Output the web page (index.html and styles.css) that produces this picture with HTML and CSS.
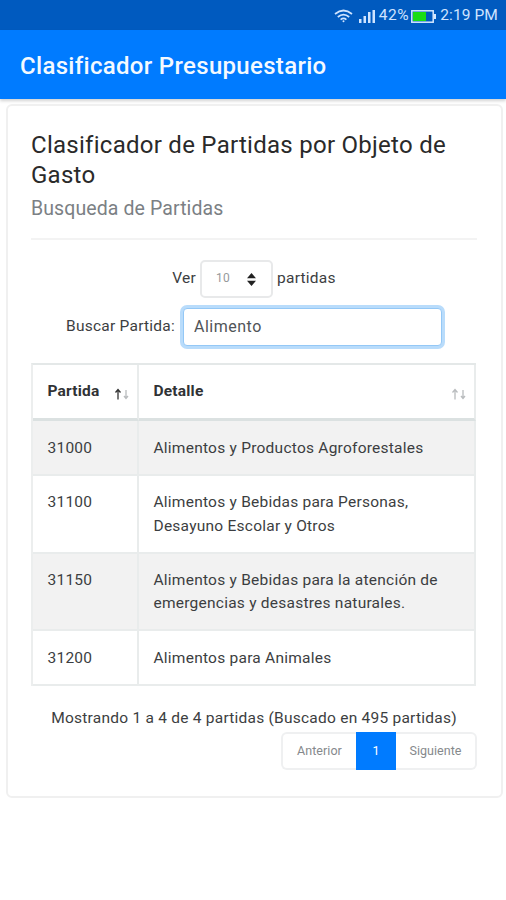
FILE: index.html
```html
<!DOCTYPE html>
<html lang="es">
<head>
<meta charset="utf-8">
<title>Clasificador Presupuestario</title>
<link rel="stylesheet" href="styles.css">
</head>
<body>
<div class="status">
  <svg class="wifi" width="19" height="14" viewBox="0 0 19 14" fill="none" stroke="currentColor" stroke-width="1.700"><path d="M1 5Q9.500-2 18 5M3.800 8Q9.500 3.200 15.200 8M6.600 10.600Q9.500 8.200 12.400 10.600"/><circle cx="9.500" cy="12.300" r="1" fill="currentColor" stroke="none"/></svg>
  <svg class="signal" width="16" height="13" viewBox="0 0 16 13" fill="currentColor"><path d="M0 9h2.500v4H0zM4.500 6H7v7H4.500zM9 2h2.500v11H9zM13.500 0H16v13h-2.500z"/></svg>
  <span class="percent">42%</span>
  <svg class="battery" width="25" height="13" viewBox="0 0 25 13"><rect x=".8" y=".8" width="21.400" height="11.400" fill="none" stroke="#d5e8ff" stroke-width="1.500"/><path d="M23 4h2v5h-2z" fill="#d5e8ff"/><path d="M2 2h13v9H2z" fill="#19dc16"/></svg>
  <span class="time">2:19 PM</span>
</div>
<header class="appbar"><h1><span>Clasificador Presupuestario</span></h1></header>
<main class="card">
  <h2 class="title">Clasificador de Partidas por Objeto de<br>Gasto</h2>
  <h3 class="subtitle"><span>Busqueda de Partidas</span></h3>
  <hr>
  <div class="length"><span class="ver">Ver</span>
    <div class="select"><span>10</span><svg width="9" height="13" viewBox="0 0 9 13" fill="#222"><path d="M0 5.200 4.500 0 9 5.200zM0 7.800h9L4.500 13z"/></svg></div>
    <span class="len-after">partidas</span></div>
  <div class="search"><label for="q">Buscar Partida:</label><input id="q" type="text" value="Alimento"></div>
  <table>
    <thead><tr>
      <th class="code"><div class="head"><span>Partida</span><svg class="sort" width="14" height="12" viewBox="0 0 14 12" fill="none" stroke-width="1.300"><path class="on" d="M3 11.500V1.500M.5 4.500 3 1.500l2.500 3"/><path class="off" d="M11 2v8.500M9 8l2 2.500L13 8"/></svg></div></th>
      <th><div class="head"><span>Detalle</span><svg class="sort" width="14" height="12" viewBox="0 0 14 12" fill="none" stroke-width="1.300"><path class="off" d="M3 11.500V1.500M.5 4.500 3 1.500l2.500 3"/><path class="off" d="M11 2v8.500M9 8l2 2.500L13 8"/></svg></div></th>
    </tr></thead>
    <tbody>
      <tr class="odd"><td>31000</td><td><span>Alimentos y Productos Agroforestales</span></td></tr>
      <tr class="tall"><td>31100</td><td>Alimentos y Bebidas para Personas,<br>Desayuno Escolar y Otros</td></tr>
      <tr class="odd tall"><td>31150</td><td>Alimentos y Bebidas para la atención de<br>emergencias y desastres naturales.</td></tr>
      <tr><td>31200</td><td>Alimentos para Animales</td></tr>
    </tbody>
  </table>
  <p class="info"><span>Mostrando 1 a 4 de 4 partidas (Buscado en 495 partidas)</span></p>
  <nav class="pages"><span class="prev">Anterior</span><span class="current">1</span><span class="next">Siguiente</span></nav>
</main>
</body>
</html>
```
FILE: styles.css
```css
* { box-sizing: border-box; }
body {
  margin: 0;
  min-height: 900px;
  background: #fff;
  color: #3c3e41;
  font: 15.5px/23.5px Roboto, "Liberation Sans", sans-serif;
  letter-spacing: .24px;
}
.status {
  height: 30px;
  padding: 2px 8px 0 0;
  display: flex;
  align-items: center;
  justify-content: flex-end;
  background: #005abf;
  color: #cfe4ff;
  font-size: 15.5px;
  letter-spacing: .1px;
}
.signal { margin-left: 6px; }
.percent { margin-left: 4px; letter-spacing: .6px; }
.battery { margin-left: 2px; }
.time { margin-left: 4px; }
.appbar {
  height: 69px;
  padding: 0 20px;
  display: flex;
  align-items: center;
  background: #007bff;
  box-shadow: 0 2px 3px rgba(0, 0, 0, .18);
}
h1 { margin: 2px 0 0; font-size: 24px; line-height: 32px; font-weight: 500; color: #f4f9ff; letter-spacing: .31px; }
.card {
  margin: 5px 3px 0 6px;
  height: 694px;
  padding: 25px 24px 0 23px;
  border: 2px solid #f0f0f0;
  border-radius: 6px;
}
.title { margin: 0; font-size: 24px; line-height: 29.5px; font-weight: 400; color: #2a2a2a; letter-spacing: .27px; white-space: nowrap; }
.subtitle { margin: 7px 0 0; font-size: 19.5px; line-height: 24px; font-weight: 400; color: #7b8084; letter-spacing: .1px; }
hr { margin: 17px 0 19px; border: 0; border-top: 2px solid #f3f3f3; }
.length { display: flex; justify-content: center; align-items: center; height: 40px; gap: 4px; }
.select {
  width: 73px; height: 38px; padding: 0 15px 0 14px;
  display: flex; align-items: center; justify-content: space-between;
  border: 2px solid #e8e9ea; border-radius: 5px;
  font-size: 12px; color: #96999b;
}
.search { display: flex; align-items: center; margin: 9px 0 0 35px; height: 38px; }
.search label { width: 117px; white-space: nowrap; }
input {
  width: 259px; height: 38px; padding: 0 10px 2px;
  border: 1px solid #94c8f6; border-radius: 4px; outline: 0;
  box-shadow: 0 0 0 3px #b9dcfb;
  color: #505458; background: #fff; font: inherit; font-size: 16px; letter-spacing: .5px;
}
table { width: 445px; margin-top: 17px; border-collapse: separate; border-spacing: 0; table-layout: fixed; border-top: 2px solid #e4e8e8; border-left: 2px solid #eceeee; }
th, td { text-align: left; border-right: 2px solid #e9ecec; border-bottom: 2px solid #e9ecec; padding: 0 14px 0 14.5px; vertical-align: top; }
th { height: 56px; border-bottom: 3px solid #dbe1e1; padding-right: 8px; vertical-align: middle; font-weight: 700; letter-spacing: .2px; color: #303235; }
th.code { width: 106px; }
.head { display: flex; justify-content: space-between; align-items: center; }
.sort { margin-top: 4px; }
.on { stroke: #333; }
.off { stroke: #b9bcbe; }
td { height: 55px; padding-top: 15.5px; white-space: nowrap; }
.tall td { height: 77.5px; padding-top: 15px; }
.odd td { background: #f2f2f2; }
.info { margin: 20px 0 0; text-align: center; line-height: 24px; white-space: nowrap; }
.pages { display: flex; justify-content: flex-end; height: 38px; margin-top: 2px; font-size: 12.5px; line-height: 34px; letter-spacing: .05px; color: #85898c; text-align: center; }
.pages span { border: 2px solid #eff0f1; }
.pages .prev { width: 75px; border-right: 0; border-radius: 6px 0 0 6px; }
.pages .current { width: 40px; background: #007bff; border-color: #007bff; color: #fff; }
.pages .next { width: 81px; border-left: 0; border-radius: 0 6px 6px 0; }
```
